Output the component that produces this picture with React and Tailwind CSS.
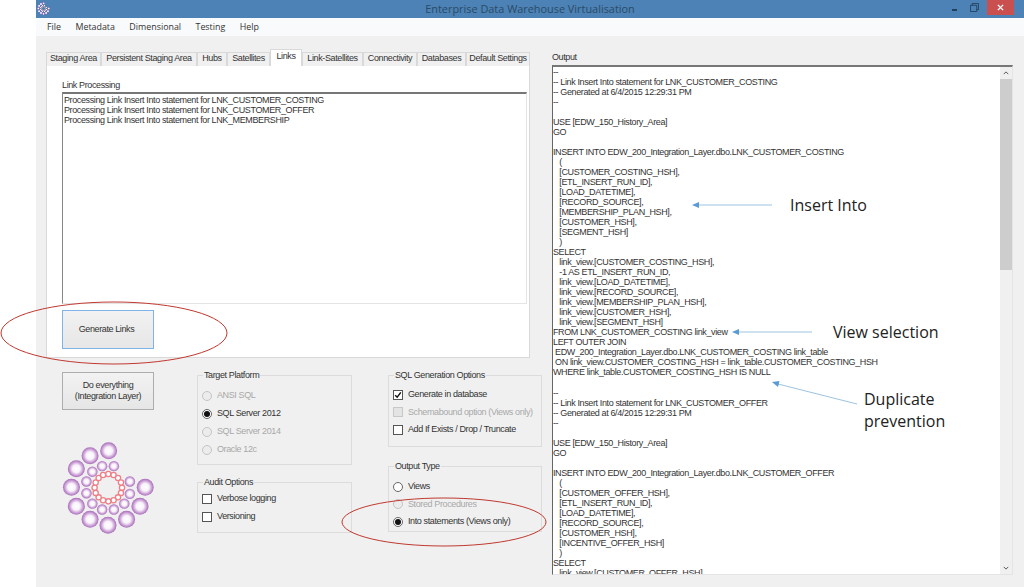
const tabs = [
  ["Staging Area", "w-[55px]"],
  ["Persistent Staging Area", "w-[96px]"],
  ["Hubs", "w-[30px]"],
  ["Satellites", "w-[43px]"],
  ["Links", "w-[32px]"],
  ["Link-Satellites", "w-[61px]"],
  ["Connectivity", "w-[54px]"],
  ["Databases", "w-[49px]"],
  ["Default Settings", "w-[64px]"],
];

const output = `--
-- Link Insert Into statement for LNK_CUSTOMER_COSTING
-- Generated at 6/4/2015 12:29:31 PM
--

USE [EDW_150_History_Area]
GO

INSERT INTO EDW_200_Integration_Layer.dbo.LNK_CUSTOMER_COSTING
   (
   [CUSTOMER_COSTING_HSH],
   [ETL_INSERT_RUN_ID],
   [LOAD_DATETIME],
   [RECORD_SOURCE],
   [MEMBERSHIP_PLAN_HSH],
   [CUSTOMER_HSH],
   [SEGMENT_HSH]
   )
SELECT
   link_view.[CUSTOMER_COSTING_HSH],
   -1 AS ETL_INSERT_RUN_ID,
   link_view.[LOAD_DATETIME],
   link_view.[RECORD_SOURCE],
   link_view.[MEMBERSHIP_PLAN_HSH],
   link_view.[CUSTOMER_HSH],
   link_view.[SEGMENT_HSH]
FROM LNK_CUSTOMER_COSTING link_view
LEFT OUTER JOIN
 EDW_200_Integration_Layer.dbo.LNK_CUSTOMER_COSTING link_table
 ON link_view.CUSTOMER_COSTING_HSH = link_table.CUSTOMER_COSTING_HSH
WHERE link_table.CUSTOMER_COSTING_HSH IS NULL

--
-- Link Insert Into statement for LNK_CUSTOMER_OFFER
-- Generated at 6/4/2015 12:29:31 PM
--

USE [EDW_150_History_Area]
GO

INSERT INTO EDW_200_Integration_Layer.dbo.LNK_CUSTOMER_OFFER
   (
   [CUSTOMER_OFFER_HSH],
   [ETL_INSERT_RUN_ID],
   [LOAD_DATETIME],
   [RECORD_SOURCE],
   [CUSTOMER_HSH],
   [INCENTIVE_OFFER_HSH]
   )
SELECT
   link_view.[CUSTOMER_OFFER_HSH],`;

const processing = [
  "Processing Link Insert Into statement for LNK_CUSTOMER_COSTING",
  "Processing Link Insert Into statement for LNK_CUSTOMER_OFFER",
  "Processing Link Insert Into statement for LNK_MEMBERSHIP",
];

const outer = [[172,60],[115,75],[73,115],[58,172],[73,230],[115,270],[170,288],[227,270],[268,230],[284,172]];
const middle = [[152,107],[188,107],[122,124],[104,154],[104,190],[122,222],[152,240],[188,240],[220,222],[237,192],[237,154]];
const inner = Array.from({ length: 16 }, (_, i) => {
  const a = (i / 16) * Math.PI * 2;
  return [171 + 42 * Math.cos(a), 173 + 42 * Math.sin(a)];
});

function Logo({ id, className }) {
  return (
    <svg viewBox="30 30 280 285" className={className}>
      <defs>
        <radialGradient id={id}>
          <stop offset="0%" stopColor="#ffffff" />
          <stop offset="45%" stopColor="#f8f2fa" />
          <stop offset="75%" stopColor="#cfa6d9" />
          <stop offset="100%" stopColor="#a66cb8" />
        </radialGradient>
      </defs>
      {outer.map(([x, y]) => (
        <circle key={`${x}-${y}`} cx={x} cy={y} r="26" fill={`url(#${id})`} />
      ))}
      {middle.map(([x, y]) => (
        <circle key={`${x}-${y}`} cx={x} cy={y} r="16" fill={`url(#${id})`} />
      ))}
      {inner.map(([x, y]) => (
        <circle key={`${x}-${y}`} cx={x} cy={y} r="8" fill="#fff" stroke="#ee7f88" strokeWidth="4" />
      ))}
    </svg>
  );
}

function Radio({ label, checked, disabled }) {
  return (
    <div className={`flex items-center gap-[5px] h-[18px] whitespace-nowrap ${disabled ? "text-[#a8a8a8]" : "text-[#333]"}`}>
      <span className={`w-[10px] h-[10px] rounded-full border flex items-center justify-center ${disabled ? "border-[#c4c4c4] bg-[#ececec]" : "border-[#666] bg-white"}`}>
        {checked && <span className="w-[6px] h-[6px] rounded-full bg-[#111]" />}
      </span>
      <span>{label}</span>
    </div>
  );
}

function Check({ label, checked, disabled }) {
  return (
    <div className={`flex items-center gap-[5px] h-[18px] whitespace-nowrap ${disabled ? "text-[#a8a8a8]" : "text-[#333]"}`}>
      <span className={`w-[10px] h-[10px] border flex items-center justify-center ${disabled ? "border-[#c8c8c8] bg-[#e4e4e4]" : "border-[#555] bg-white"}`}>
        {checked && (
          <svg viewBox="0 0 10 10" className="w-[8px] h-[8px]">
            <path d="M1.5 5.2 L4 7.8 L8.5 1.8" fill="none" stroke="#111" strokeWidth="1.8" />
          </svg>
        )}
      </span>
      <span>{label}</span>
    </div>
  );
}

function Group({ title, className, children }) {
  return (
    <fieldset className={`border border-[#dcdcdc] pl-[4px] ${className}`}>
      <legend className="ml-px px-px leading-[12px] text-[#333]">{title}</legend>
      {children}
    </fieldset>
  );
}

export default function App() {
  return (
    <div className="relative w-[1024px] h-[587px] overflow-hidden bg-white pl-[36px] font-['Open_Sans',sans-serif] text-[9px]">
      <div className="flex flex-col h-full">
        {/* Title bar */}
        <div className="relative h-[18px] bg-[#4c82b5] flex items-center justify-center shrink-0">
          <Logo id="titleIcon" className="absolute left-[1px] top-[2px] w-[13px] h-[13px]" />
          <span className="text-[10.9px] text-[#2b4a66]">Enterprise Data Warehouse Virtualisation</span>
          <div className="absolute right-[10px] top-0 flex items-start">
            <div className="w-[5px] h-[2px] bg-[#22405c] mt-[9px] mr-[13px]" />
            <svg viewBox="0 0 10 10" className="w-[9px] h-[9px] mt-[3px] mr-[8px]">
              <path d="M0.5 2.5h7v7h-7z M2.5 2.5v-2h7v7h-2" fill="none" stroke="#22405c" strokeWidth="1" />
            </svg>
            <div className="w-[27px] h-[15px] bg-[#c9504f] flex items-center justify-center">
              <svg viewBox="0 0 8 8" className="w-[7px] h-[7px]">
                <path d="M1 1L7 7M7 1L1 7" stroke="#fff" strokeWidth="1.6" />
              </svg>
            </div>
          </div>
        </div>

        {/* Menu */}
        <div className="h-[18px] bg-[#f9fafc] flex items-center gap-[14.4px] pl-[11px] text-[8.9px] text-[#333] shrink-0">
          <span>File</span>
          <span>Metadata</span>
          <span>Dimensional</span>
          <span>Testing</span>
          <span>Help</span>
        </div>

        <div className="flex-1 flex bg-[#f0f0f0] pl-[10px] font-['Liberation_Sans',sans-serif] text-[9px] tracking-[-0.38px]">
          {/* Left side */}
          <div className="w-[484px] mr-[22px] shrink-0">
            <div className="flex items-end h-[17px] mt-[13px]">
              {tabs.map(([name, width]) => {
                const active = name === "Links";
                return (
                  <div
                    key={name}
                    className={`${width} flex items-center justify-center border border-b-0 border-[#d9d9d9] text-[#333] whitespace-nowrap ${active ? "h-[17px] bg-white relative z-10 pb-[3px]" : "h-[14px] bg-[#f0f0f0] pb-[2px]"}`}
                  >
                    {name}
                  </div>
                );
              })}
            </div>

            <div className="-mt-px h-[293px] bg-white border border-[#d9d9d9] pl-[15px] pr-[2px] pt-[13px]">
              <div className="h-[12px] leading-[12px] text-[#333]">Link Processing</div>
              <div className="mt-px h-[212px] border border-[#e4e4e4] border-t-2 border-t-[#777] border-l-[#888] pl-[1px] pt-[1px] leading-[10px] text-[#333] whitespace-pre">
                {processing.map((line) => (
                  <div key={line}>{line}</div>
                ))}
              </div>
              <div className="mt-[6px] w-[92px] h-[39px] border border-[#7eb4ea] bg-gradient-to-b from-[#f2f2f2] to-[#e6e6e6] flex items-center justify-center pr-[3px] text-[#333]">
                Generate Links
              </div>
            </div>

            <div className="flex pl-[16px] mt-[11px]">
              <div className="w-[92px] shrink-0 mt-[3px]">
                <div className="h-[38px] border border-[#adadad] bg-gradient-to-b from-[#f2f2f2] to-[#e6e6e6] flex items-center justify-center text-center leading-[11px] text-[#333]">
                  Do everything
                  <br />
                  (Integration Layer)
                </div>
                <Logo id="mainLogo" className="mt-[31px] w-[92px] h-[93px]" />
              </div>

              <div className="w-[155px] ml-[43px] shrink-0">
                <Group title="Target Platform" className="h-[96px] pt-[6px]">
                  <Radio label="ANSI SQL" disabled />
                  <Radio label="SQL Server 2012" checked />
                  <Radio label="SQL Server 2014" disabled />
                  <Radio label="Oracle 12c" disabled />
                </Group>
                <Group title="Audit Options" className="h-[57px] mt-[11px] pt-[2px]">
                  <Check label="Verbose logging" />
                  <Check label="Versioning" />
                </Group>
              </div>

              <div className="w-[154px] ml-[36px] shrink-0">
                <Group title="SQL Generation Options" className="h-[78px] pt-[5px] [&>div]:h-[17.5px]">
                  <Check label="Generate in database" checked />
                  <Check label="Schemabound option (Views only)" disabled />
                  <Check label="Add If Exists / Drop / Truncate" />
                </Group>
                <Group title="Output Type" className="h-[72px] mt-[13px] pt-[6px] [&>div]:h-[17.5px]">
                  <Radio label="Views" />
                  <Radio label="Stored Procedures" disabled />
                  <Radio label="Into statements (Views only)" checked />
                </Group>
              </div>
            </div>
          </div>

          {/* Output */}
          <div className="w-[461px] shrink-0">
            <div className="mt-[15px] h-[12px] leading-[12px] text-[#333]">Output</div>
            <div className="mt-[2px] h-[510px] flex bg-white border border-[#e4e4e4] border-t-2 border-t-[#777] border-l-[#666] overflow-hidden">
              <div className="flex-1 text-[#333] whitespace-pre overflow-hidden">
                {output.split("\n").map((line, i) => (
                  <div key={i} className="h-[10.03px] leading-[10.03px]">{line}</div>
                ))}
              </div>
              <div className="w-[12px] shrink-0 bg-[#f0f0f0] flex flex-col items-center">
                <svg viewBox="0 0 8 5" className="w-[6px] h-[4px] mt-[4px]">
                  <path d="M1 4L4 1L7 4" fill="none" stroke="#555" strokeWidth="1.3" />
                </svg>
                <div className="w-full h-[191px] mt-[4px] bg-[#cdcdcd]" />
                <svg viewBox="0 0 8 5" className="w-[6px] h-[4px] mt-auto mb-[4px]">
                  <path d="M1 1L4 4L7 1" fill="none" stroke="#555" strokeWidth="1.3" />
                </svg>
              </div>
            </div>
          </div>
        </div>
      </div>

      {/* Annotations drawn over the screenshot */}
      <svg className="absolute inset-0 w-[1024px] h-[587px] pointer-events-none" viewBox="0 0 1024 587">
        <ellipse cx="114" cy="333" rx="113" ry="31" fill="none" stroke="#c0392f" strokeWidth="1" />
        <ellipse cx="444" cy="522" rx="102" ry="24" fill="none" stroke="#c0392f" strokeWidth="1" />
        <path d="M772 205H698" stroke="#9dc3e0" strokeWidth="1" />
        <path d="M692 205l7-3v6z" fill="#5b9bd5" />
        <path d="M812 332H738" stroke="#9dc3e0" strokeWidth="1" />
        <path d="M732 332l7-3v6z" fill="#5b9bd5" />
        <path d="M857 404L778 384" stroke="#9dc3e0" strokeWidth="1" />
        <path d="M772 382l7.5-1-1.500 6z" fill="#5b9bd5" />
      </svg>
      <div className="absolute left-[790px] top-[194px] font-['Open_Sans',sans-serif] text-[16px] leading-[22px] text-[#222]">Insert Into</div>
      <div className="absolute left-[833px] top-[321px] font-['Open_Sans',sans-serif] text-[16px] leading-[22px] text-[#222]">View selection</div>
      <div className="absolute left-[864px] top-[388px] font-['Open_Sans',sans-serif] text-[16px] leading-[22px] text-[#222]">
        Duplicate
        <br />
        prevention
      </div>
    </div>
  );
}
